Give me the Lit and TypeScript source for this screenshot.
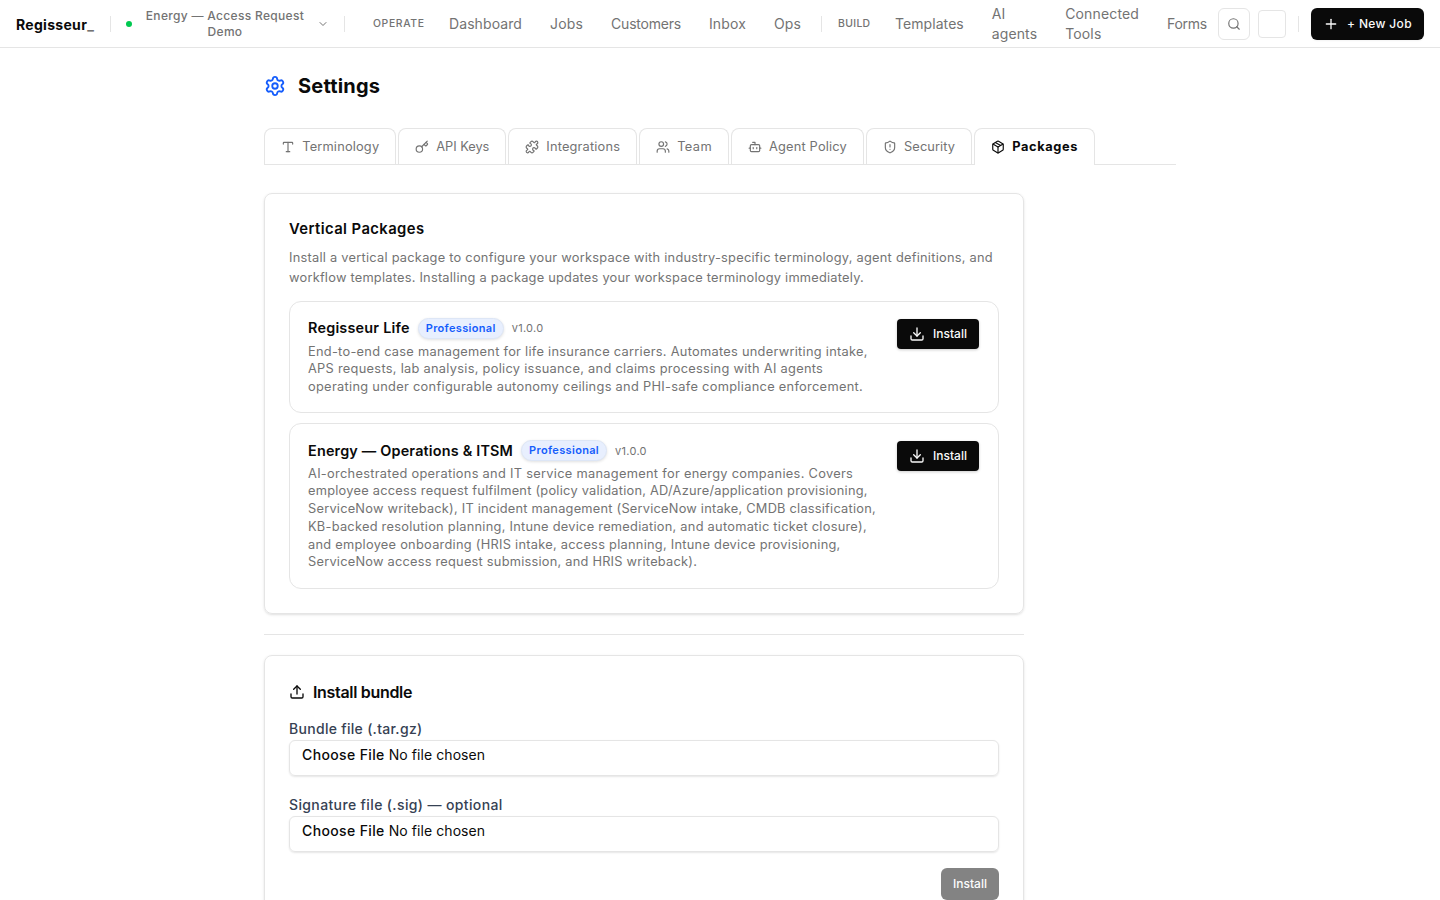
import { LitElement, html, css, svg } from "lit";
import { customElement } from "lit/decorators.js";
import { classMap } from "lit/directives/class-map.js";

const ICONS: Record<string, unknown> = {
  settings: svg`<path d="M9.671 4.136a2.34 2.34 0 0 1 4.659 0 2.34 2.34 0 0 0 3.319 1.915 2.34 2.34 0 0 1 2.33 4.033 2.34 2.34 0 0 0 0 3.831 2.34 2.34 0 0 1-2.33 4.033 2.34 2.34 0 0 0-3.319 1.915 2.34 2.34 0 0 1-4.659 0 2.34 2.34 0 0 0-3.32-1.915 2.34 2.34 0 0 1-2.33-4.033 2.34 2.34 0 0 0 0-3.831A2.34 2.34 0 0 1 6.35 6.051a2.34 2.34 0 0 0 3.319-1.915"/><circle cx="12" cy="12" r="3"/>`,
  type: svg`<path d="M12 4v16"/><path d="M4 7V5a1 1 0 0 1 1-1h14a1 1 0 0 1 1 1v2"/><path d="M9 20h6"/>`,
  key: svg`<path d="m15.5 7.5 2.3 2.3a1 1 0 0 0 1.4 0l2.1-2.1a1 1 0 0 0 0-1.4L19 4"/><path d="m21 2-9.6 9.6"/><circle cx="7.5" cy="15.5" r="5.5"/>`,
  puzzle: svg`<path d="M15.39 4.39a1 1 0 0 0 1.68-.474 2.5 2.5 0 1 1 3.014 3.015 1 1 0 0 0-.474 1.68l1.683 1.682a2.414 2.414 0 0 1 0 3.414L19.61 15.39a1 1 0 0 1-1.68-.474 2.5 2.5 0 1 0-3.014 3.015 1 1 0 0 1 .474 1.68l-1.683 1.682a2.414 2.414 0 0 1-3.414 0L8.61 19.61a1 1 0 0 0-1.68.474 2.5 2.5 0 1 1-3.014-3.015 1 1 0 0 0 .474-1.68l-1.683-1.682a2.414 2.414 0 0 1 0-3.414L4.39 8.61a1 1 0 0 1 1.68.474 2.5 2.5 0 1 0 3.014-3.015 1 1 0 0 1-.474-1.68l1.683-1.682a2.414 2.414 0 0 1 3.414 0z"/>`,
  users: svg`<path d="M16 21v-2a4 4 0 0 0-4-4H6a4 4 0 0 0-4 4v2"/><path d="M16 3.128a4 4 0 0 1 0 7.744"/><path d="M22 21v-2a4 4 0 0 0-3-3.87"/><circle cx="9" cy="7" r="4"/>`,
  bot: svg`<path d="M12 8V4H8"/><rect width="16" height="12" x="4" y="8" rx="2"/><path d="M2 14h2"/><path d="M20 14h2"/><path d="M15 13v2"/><path d="M9 13v2"/>`,
  shield: svg`<path d="M20 13c0 5-3.5 7.5-7.66 8.95a1 1 0 0 1-.67-.01C7.5 20.5 4 18 4 13V6a1 1 0 0 1 1-1c2 0 4.5-1.2 6.24-2.72a1.17 1.17 0 0 1 1.52 0C14.51 3.81 17 5 19 5a1 1 0 0 1 1 1z"/><path d="M12 8v4"/><path d="M12 16h.01"/>`,
  pkg: svg`<path d="M11 21.73a2 2 0 0 0 2 0l7-4A2 2 0 0 0 21 16V8a2 2 0 0 0-1-1.73l-7-4a2 2 0 0 0-2 0l-7 4A2 2 0 0 0 3 8v8a2 2 0 0 0 1 1.73z"/><path d="M12 22V12"/><polyline points="3.29 7 12 12 20.71 7"/><path d="m7.5 4.27 9 5.15"/>`,
  download: svg`<path d="M12 15V3"/><path d="M21 15v4a2 2 0 0 1-2 2H5a2 2 0 0 1-2-2v-4"/><path d="m7 10 5 5 5-5"/>`,
  upload: svg`<path d="M12 3v12"/><path d="m17 8-5-5-5 5"/><path d="M21 15v4a2 2 0 0 1-2 2H5a2 2 0 0 1-2-2v-4"/>`,
  search: svg`<path d="m21 21-4.34-4.34"/><circle cx="11" cy="11" r="8"/>`,
  chevron: svg`<path d="m6 9 6 6 6-6"/>`,
  plus: svg`<path d="M5 12h14"/><path d="M12 5v14"/>`,
};

const icon = (name: string, size: number, stroke = 2) => html`<svg
  class="icon" width=${size} height=${size} viewBox="0 0 24 24" fill="none"
  stroke="currentColor" stroke-width=${stroke} stroke-linecap="round" stroke-linejoin="round"
>${ICONS[name]}</svg>`;

const TABS = [
  { label: "Terminology", icon: "type" },
  { label: "API Keys", icon: "key" },
  { label: "Integrations", icon: "puzzle" },
  { label: "Team", icon: "users" },
  { label: "Agent Policy", icon: "bot" },
  { label: "Security", icon: "shield" },
  { label: "Packages", icon: "pkg", active: true },
];

const PACKAGES = [
  {
    id: "life",
    name: "Regisseur Life",
    lines: [
      "End-to-end case management for life insurance carriers. Automates underwriting intake,",
      "APS requests, lab analysis, policy issuance, and claims processing with AI agents",
      "operating under configurable autonomy ceilings and PHI-safe compliance enforcement.",
    ],
  },
  {
    id: "energy",
    name: "Energy — Operations & ITSM",
    lines: [
      "AI-orchestrated operations and IT service management for energy companies. Covers",
      "employee access request fulfilment (policy validation, AD/Azure/application provisioning,",
      "ServiceNow writeback), IT incident management (ServiceNow intake, CMDB classification,",
      "KB-backed resolution planning, Intune device remediation, and automatic ticket closure),",
      "and employee onboarding (HRIS intake, access planning, Intune device provisioning,",
      "ServiceNow access request submission, and HRIS writeback).",
    ],
  },
];

@customElement("app-root")
export class AppRoot extends LitElement {
  static styles = css`
    :host {
      display: block;
      height: 100vh;
      overflow: hidden;
      background: #fff;
      color: #0a0a0a;
      font-family: Inter, sans-serif;
      font-size: 14px;
      line-height: 20px;
      letter-spacing: 0.02em;
    }
    * { box-sizing: border-box; }
    h1, h2, p { margin: 0; }
    button { font: inherit; letter-spacing: inherit; border: 0; margin: 0; padding: 0; color: inherit; background: none; }
    .icon { display: block; flex: none; }

    .topbar {
      display: flex;
      align-items: center;
      height: 48px;
      padding: 0 16px;
      border-bottom: 1px solid #e5e5e5;
      white-space: nowrap;
    }
    .topbar > * { flex: none; }
    .brand { width: 78px; margin-right: 16px; font-weight: 700; letter-spacing: 0.3px; padding-top: 2px; }
    .cursor { color: #737373; }
    .rule { width: 1px; height: 16px; background: #e5e5e5; flex: none; }
    .workspace {
      display: flex; align-items: center; width: 233px; padding-left: 15px;
      color: #737373; font-size: 12px; line-height: 16px; font-weight: 500; letter-spacing: 0.32px;
    }
    .dot { width: 6px; height: 6px; border-radius: 50%; background: #00c950; flex: none; }
    .wsname { width: 185px; padding-left: 1px; text-align: center; }
    .chev { width: 12px; }
    .group { color: #737373; font-size: 10.4px; font-weight: 500; line-height: 16px; }
    .operate { width: 62px; margin-left: 28px; letter-spacing: 0.65px; }
    .build { width: 43px; margin-left: 16px; letter-spacing: 0.35px; }
    .link { padding: 0 14px; color: #737373; flex: none; }
    .links { display: flex; align-items: center; }
    .main { width: 386px; }
    .main .link:nth-child(1) { letter-spacing: 0.09px; }
    .main .link:nth-child(2) { letter-spacing: 0.17px; }
    .main .link:nth-child(3) { letter-spacing: -0.22px; }
    .main .link:nth-child(4) { letter-spacing: 0.15px; }
    .main .link:nth-child(5) { letter-spacing: 0.15px; }
    .secondary { width: 337px; }
    .secondary .link:nth-child(1) { letter-spacing: 0.07px; }
    .secondary .link:nth-child(2) { letter-spacing: 0.1px; }
    .secondary .link:nth-child(3) { letter-spacing: 0.15px; }
    .secondary .link:nth-child(4) { letter-spacing: -0.3px; padding-right: 0; }
    .tools { display: flex; align-items: center; margin-left: auto; }
    .search { display: grid; place-items: center; width: 32px; height: 32px; border: 1px solid #e5e5e5; border-radius: 6px; color: #737373; }
    .blank { width: 28px; height: 28px; border: 1px solid #e5e5e5; border-radius: 4px; margin: 0 12px 0 8px; }
    .newjob {
      display: flex; align-items: center; gap: 8px; width: 113px; height: 32px; margin-left: 12px; padding: 0 12px;
      border-radius: 6px; background: #0a0a0a; color: #fafafa; font-size: 12px; font-weight: 500; letter-spacing: 0.34px;
      box-shadow: 0 1px 2px rgba(0, 0, 0, 0.05);
    }

    .page { width: 912px; margin: 0 auto; padding-top: 24px; }
    .heading { display: flex; align-items: center; gap: 12px; height: 28px; }
    .heading .icon { color: #155dfc; }
    .heading h1 { font-size: 20px; line-height: 28px; font-weight: 700; letter-spacing: 0.2px; }
    .tabs { display: flex; gap: 2px; margin-top: 28px; height: 37px; border-bottom: 1px solid #e5e5e5; }
    .tab {
      display: flex; align-items: center; gap: 7.2px; height: 36px; padding: 0 15.9px 0 16px;
      border: 1px solid #e5e5e5; border-bottom: 0; border-radius: 8px 8px 0 0;
      color: #737373; font-size: 12.8px; white-space: nowrap; letter-spacing: 0.18px;
    }
    .tab:nth-child(2) { letter-spacing: -0.05px; }
    .tab:nth-child(4) { letter-spacing: 0.38px; }
    .tab:nth-child(6) { letter-spacing: 0.11px; }
    .tab.active { height: 37px; padding-bottom: 1px; background: #fff; color: #0a0a0a; font-weight: 700; letter-spacing: 0.62px; }

    .column { width: 760px; }
    .card { border: 1px solid #e5e5e5; border-radius: 8px; padding: 24px; box-shadow: 0 1px 3px rgba(0, 0, 0, 0.1), 0 1px 2px -1px rgba(0, 0, 0, 0.1); }
    .packages { margin-top: 28px; height: 421px; }
    .title { font-size: 14.8px; line-height: 22px; font-weight: 600; letter-spacing: 0.42px; }
    .intro { margin: 8px 0 13px; color: #737373; font-size: 12.8px; line-height: 20px; letter-spacing: 0.255px; white-space: nowrap; }
    .intro-end { letter-spacing: 0.235px; }
    .item { display: flex; align-items: flex-start; justify-content: space-between; border: 1px solid #e5e5e5; border-radius: 12px; padding: 16px 18px; }
    .life { height: 112px; }
    .energy { height: 166px; }
    .item + .item { margin-top: 10px; }
    .row { display: flex; align-items: center; gap: 8px; height: 20px; margin-bottom: 4.6px; }
    .name { font-size: 14.4px; font-weight: 600; letter-spacing: 0.22px; }
    .energy .name { letter-spacing: 0.19px; }
    .badge {
      height: 21px; padding: 0 7px; border: 1px solid #dde6f6; border-radius: 11px; background: #e8effe; color: #155dfc;
      font-size: 11px; line-height: 19px; font-weight: 600; letter-spacing: 0.03em; box-shadow: 0 1px 3px rgba(0, 0, 0, 0.12);
    }
    .energy .row { height: 21px; margin-bottom: 3.6px; }
    .version { color: #737373; font-size: 11px; }
    .text { color: #737373; font-size: 12.8px; line-height: 17.75px; letter-spacing: 0.28px; white-space: nowrap; }
    .line { display: block; }
    .life .line:nth-child(2) { letter-spacing: 0.29px; }
    .life .line:nth-child(3) { letter-spacing: 0.305px; }
    .energy .line:nth-child(1) { letter-spacing: 0.3px; }
    .energy .line:nth-child(2) { letter-spacing: 0.25px; }
    .energy .line:nth-child(3) { letter-spacing: 0.23px; }
    .energy .line:nth-child(4) { letter-spacing: 0.265px; }
    .energy .line:nth-child(5) { letter-spacing: 0.27px; }
    .energy .line:nth-child(6) { letter-spacing: 0.235px; }
    .install {
      display: flex; align-items: center; gap: 8px; width: 82px; height: 30px; margin: 1px 1px 0 0; padding: 0 12px;
      border-radius: 4px; background: #0a0a0a; color: #fafafa; font-size: 12px; font-weight: 500; letter-spacing: 0;
      box-shadow: 0 1px 3px rgba(0, 0, 0, 0.2);
    }
    .separator { height: 1px; background: #e5e5e5; margin: 20px 0; }
    .bundle { height: 320px; }
    .bundlehead { display: flex; align-items: center; gap: 8px; height: 24px; font-size: 16px; font-weight: 600; letter-spacing: -0.02em; }
    .label { color: #364153; font-weight: 500; line-height: 20px; letter-spacing: 0.37px; }
    .field { margin-top: 15px; }
    .field:nth-child(2) .label { letter-spacing: 0.3px; }
    .field + .field { margin-top: 19px; }
    .file { height: 36px; border: 1px solid #e5e5e5; border-radius: 6px; padding: 4px 12px; margin-top: 1px; box-shadow: 0 1px 2px rgba(0, 0, 0, 0.1); letter-spacing: 0.07px; }
    .choose { font-weight: 500; letter-spacing: 0.37px; }
    .actions { display: flex; justify-content: flex-end; margin-top: 16px; }
    .submit { width: 58px; height: 32px; border-radius: 6px; background: #0a0a0a; color: #fafafa; opacity: 0.5; font-size: 12px; font-weight: 500; letter-spacing: 0; }
  `;

  private file(label: string) {
    return html`<div class="field">
      <div class="label">${label}</div>
      <div class="file"><span class="choose">Choose File</span> <span>No file chosen</span></div>
    </div>`;
  }

  render() {
    return html`
      <header class="topbar">
        <div class="brand">Regisseur<span class="cursor">_</span></div>
        <span class="rule"></span>
        <div class="workspace">
          <span class="dot"></span>
          <span class="wsname">Energy — Access Request<br />Demo</span>
          <span class="chev">${icon("chevron", 12)}</span>
        </div>
        <span class="rule"></span>
        <span class="group operate">OPERATE</span>
        <nav class="links main">
          ${["Dashboard", "Jobs", "Customers", "Inbox", "Ops"].map((l) => html`<span class="link">${l}</span>`)}
        </nav>
        <span class="rule"></span>
        <span class="group build">BUILD</span>
        <nav class="links secondary">
          <span class="link">Templates</span>
          <span class="link">AI<br />agents</span>
          <span class="link">Connected<br />Tools</span>
          <span class="link">Forms</span>
        </nav>
        <div class="tools">
          <span class="search">${icon("search", 14)}</span>
          <span class="blank"></span>
          <span class="rule"></span>
          <button class="newjob">${icon("plus", 16)}<span>+ New Job</span></button>
        </div>
      </header>
      <main class="page">
        <div class="heading">${icon("settings", 22)}<h1>Settings</h1></div>
        <div class="tabs">
          ${TABS.map((t) => html`<div class=${classMap({ tab: true, active: !!t.active })}>${icon(t.icon, 14)}<span>${t.label}</span></div>`)}
        </div>
        <div class="column">
          <section class="card packages">
            <h2 class="title">Vertical Packages</h2>
            <p class="intro">Install a vertical package to configure your workspace with industry-specific terminology, agent definitions, and<br /><span class="intro-end">workflow templates. Installing a package updates your workspace terminology immediately.</span></p>
            ${PACKAGES.map((p) => html`<div class="item ${p.id}">
              <div class="info">
                <div class="row"><span class="name">${p.name}</span><span class="badge">Professional</span><span class="version">v1.0.0</span></div>
                <p class="text">${p.lines.map((l) => html`<span class="line">${l}</span>`)}</p>
              </div>
              <button class="install">${icon("download", 16)}<span>Install</span></button>
            </div>`)}
          </section>
          <div class="separator"></div>
          <section class="card bundle">
            <h2 class="bundlehead">${icon("upload", 16)}<span>Install bundle</span></h2>
            ${this.file("Bundle file (.tar.gz)")}
            ${this.file("Signature file (.sig) — optional")}
            <div class="actions"><button class="submit">Install</button></div>
          </section>
        </div>
      </main>
    `;
  }
}
